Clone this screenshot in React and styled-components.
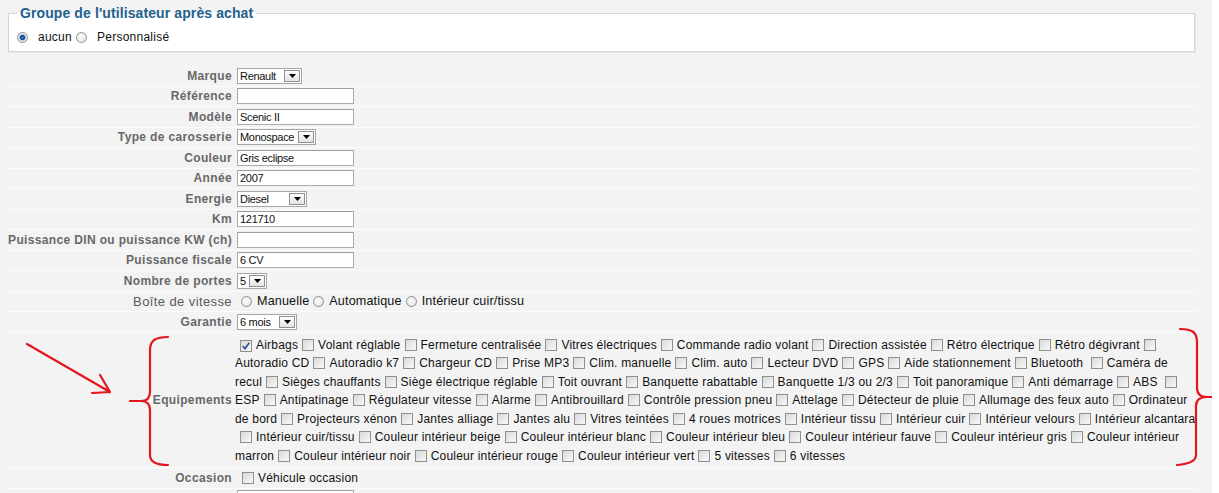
import React from 'react';
import styled, { createGlobalStyle } from 'styled-components';

//---------------------------------------------------------------------

const GlobalStyle = createGlobalStyle`
  html, body {
    margin: 0;
    padding: 0;
    background: #fff;
    overflow: hidden;
  }
  body {
    font-family: "Liberation Sans", Arial, sans-serif;
    font-size: 12px;
    color: #111;
  }
`;

const fields = [
  { label: 'Marque', kind: 'select', value: 'Renault', width: 65 },
  { label: 'Référence', kind: 'text', value: '' },
  { label: 'Modèle', kind: 'text', value: 'Scenic II' },
  { label: 'Type de carosserie', kind: 'select', value: 'Monospace', width: 79 },
  { label: 'Couleur', kind: 'text', value: 'Gris eclipse' },
  { label: 'Année', kind: 'text', value: '2007' },
  { label: 'Energie', kind: 'select', value: 'Diesel', width: 70 },
  { label: 'Km', kind: 'text', value: '121710' },
  { label: 'Puissance DIN ou puissance KW (ch)', kind: 'text', value: '' },
  { label: 'Puissance fiscale', kind: 'text', value: '6 CV' },
  { label: 'Nombre de portes', kind: 'select', value: '5', width: 30 },
  { label: 'Boîte de vitesse', kind: 'radios', light: true, options: ['Manuelle', 'Automatique', 'Intérieur cuir/tissu'] },
  { label: 'Garantie', kind: 'select', value: '6 mois', width: 60 },
];

// each line of the equipment list, as it wraps on screen
// a string is plain text, an object is a checkbox with its label
const equipLines = [
  [{ t: 'Airbags', on: true }, { t: 'Volant réglable' }, { t: 'Fermeture centralisée' }, { t: 'Vitres électriques' }, { t: 'Commande radio volant' }, { t: 'Direction assistée' }, { t: 'Rétro électrique' }, { t: 'Rétro dégivrant' }, { t: '' }],
  ['Autoradio CD', { t: 'Autoradio k7' }, { t: 'Chargeur CD' }, { t: 'Prise MP3' }, { t: 'Clim. manuelle' }, { t: 'Clim. auto' }, { t: 'Lecteur DVD' }, { t: 'GPS' }, { t: 'Aide stationnement' }, { t: 'Bluetooth\u00a0' }, { t: 'Caméra de' }],
  ['recul', { t: 'Sièges chauffants' }, { t: 'Siège électrique réglable' }, { t: 'Toit ouvrant' }, { t: 'Banquette rabattable' }, { t: 'Banquette 1/3 ou 2/3' }, { t: 'Toit panoramique' }, { t: 'Anti démarrage' }, { t: 'ABS\u00a0' }, { t: '' }],
  ['ESP', { t: 'Antipatinage' }, { t: 'Régulateur vitesse' }, { t: 'Alarme' }, { t: 'Antibrouillard' }, { t: 'Contrôle pression pneu' }, { t: 'Attelage' }, { t: 'Détecteur de pluie' }, { t: 'Allumage des feux auto' }, { t: 'Ordinateur' }],
  ['de bord', { t: 'Projecteurs xénon' }, { t: 'Jantes alliage' }, { t: 'Jantes alu' }, { t: 'Vitres teintées' }, { t: '4 roues motrices' }, { t: 'Intérieur tissu' }, { t: 'Intérieur cuir' }, { t: 'Intérieur velours' }, { t: 'Intérieur alcantara' }],
  [{ t: 'Intérieur cuir/tissu' }, { t: 'Couleur intérieur beige' }, { t: 'Couleur intérieur blanc' }, { t: 'Couleur intérieur bleu' }, { t: 'Couleur intérieur fauve' }, { t: 'Couleur intérieur gris' }, { t: 'Couleur intérieur' }],
  ['marron', { t: 'Couleur intérieur noir' }, { t: 'Couleur intérieur rouge' }, { t: 'Couleur intérieur vert' }, { t: '5 vitesses' }, { t: '6 vitesses' }],
];

//---------------------------------------------------------------------

const CheckBox = ({ on, first }) => (
  <Box first={first ? 1 : 0}>
    {on && (
      <svg width="10" height="10" viewBox="0 0 10 10">
        <path d="M1.8 5 L4 7.6 L8.3 1.8" fill="none" stroke="#2c4f9e" strokeWidth="1.7" />
      </svg>
    )}
  </Box>
);

const Radio = ({ on, small }) => <Circle on={on ? 1 : 0} small={small ? 1 : 0} />;

const Select = ({ value, width }) => (
  <SelectBox style={{ width }}>
    <span>{value}</span>
    <DropButton>
      <svg width="7" height="4" viewBox="0 0 7 4">
        <path d="M0 0 H7 L3.5 4 Z" fill="#000" />
      </svg>
    </DropButton>
  </SelectBox>
);

const Annotations = () => (
  <Overlay width="1219" height="493" viewBox="0 0 1219 493">
    <g fill="none" stroke="#e3161d" strokeWidth="2.2" strokeLinecap="round" strokeLinejoin="round">
      <path d="M27 344 L110 392 M100 375 L110 392 L92 393" />
      <path d="M168 337 C156 337 150 340 150 350 L150 392 C150 398 147 401 141 401 L130 401 M141 401 C147 401 150 404 150 410 L150 455 C150 462 156 465 168 465" />
      <path d="M1180 329 C1192 329 1197 332 1197 342 L1197 388 C1197 394 1200 397 1207 397 L1219 397 M1207 397 C1200 397 1196 400 1196 406 L1196 455 C1196 461 1190 464 1177 465" />
    </g>
  </Overlay>
);

const renderValue = f => {
  if (f.kind === 'select') return <Select value={f.value} width={f.width} />;
  if (f.kind === 'radios') {
    return (
      <RadioGroup>
        {f.options.map(o => (
          <RadioLabel key={o} wide={1}>
            <Radio small />
            {o}
          </RadioLabel>
        ))}
      </RadioGroup>
    );
  }
  return <TextInput readOnly value={f.value} />;
};

//---------------------------------------------------------------------

const App = () => {
  return (
    <Page>
      <GlobalStyle />
      <Group>
        <Legend>Groupe de l'utilisateur après achat</Legend>
        <RadioGroup>
          <RadioLabel>
            <Radio on />
            aucun
          </RadioLabel>
          <RadioLabel>
            <Radio />
            Personnalisé
          </RadioLabel>
        </RadioGroup>
      </Group>

      <Form>
        {fields.map(f => (
          <Row key={f.label}>
            <Label light={f.light ? 1 : 0}>{f.label}</Label>
            <Value>{renderValue(f)}</Value>
          </Row>
        ))}

        <Row>
          <Label>Equipements</Label>
          <EquipList>
            {equipLines.map((line, i) => (
              <EquipLine key={i}>
                {line.map((item, j) =>
                  typeof item === 'string' ? (
                    <span key={j}>{item}</span>
                  ) : (
                    <span key={j}>
                      <CheckBox on={item.on} first={j === 0} />
                      {item.t}
                    </span>
                  )
                )}
              </EquipLine>
            ))}
          </EquipList>
        </Row>

        <Row>
          <Label>Occasion</Label>
          <Value>
            <CheckBox first />
            Véhicule occasion
          </Value>
        </Row>

        <Row>
          <Label>Cylindrée (en cm3)</Label>
          <Value>
            <TextInput readOnly value="" />
          </Value>
        </Row>
      </Form>

      <Annotations />
    </Page>
  );
};

export default App;

//---------------------------------------------------------------------

const Page = styled.div`
  position: relative;
  width: 1212px;
  height: 493px;
  overflow: hidden;
  background: #f3f3f3;
  padding: 0 8px;
  box-sizing: border-box;
`;

const Group = styled.fieldset`
  margin: 5px 9px 0 0;
  padding: 8px 4px 6px 4px;
  border: 1px solid #d6d6d6;
  box-shadow: 1px 1px 0 #e6e6e6;
  background: #fff;
`;

const Legend = styled.legend`
  margin-left: 4px;
  padding: 0 3px;
  font-weight: bold;
  font-size: 14px;
  letter-spacing: 0.1px;
  line-height: 16px;
  color: #22618d;
`;

const RadioGroup = styled.div`
  display: flex;
  align-items: center;
  line-height: 16px;
  white-space: nowrap;
`;

const RadioLabel = styled.label`
  display: inline-flex;
  align-items: center;
  font-size: ${p => (p.wide ? '12.6px' : '12px')};
  letter-spacing: ${p => (p.wide ? '0.15px' : '0.25px')};
`;

const Circle = styled.span`
  display: inline-block;
  box-sizing: border-box;
  width: 11px;
  height: 11px;
  margin: ${p => (p.small ? '0 5px 0 4px' : '0 10px 0 4px')};
  border-radius: 50%;
  border: 1px solid #8c8f91;
  background: ${p =>
    p.on
      ? 'radial-gradient(circle, #3e74c8 0, #1c4e9a 2.3px, #dce4ee 3.3px, #f6f8fa 100%)'
      : 'radial-gradient(circle at 40% 40%, #fafafa 0, #e1e1e1 100%)'};
`;

const Form = styled.div`
  margin-top: 14px;
  width: 1189px;
`;

const Row = styled.div`
  display: grid;
  grid-template-columns: 227px 1fr;
  min-height: 20.5px;
  box-sizing: border-box;
  border-bottom: 1px solid #fcfcfc;
`;

const Label = styled.div`
  display: flex;
  align-items: center;
  justify-content: flex-end;
  padding-right: 3px;
  font-weight: ${p => (p.light ? 'normal' : 'bold')};
  font-size: ${p => (p.light ? '13px' : '12px')};
  letter-spacing: ${p => (p.light ? '0.4px' : '0.35px')};
  color: ${p => (p.light ? '#5a5a5a' : '#686868')};
  white-space: nowrap;
`;

const Value = styled.div`
  display: flex;
  align-items: center;
  padding-left: 2px;
  font-size: 12px;
  letter-spacing: 0.2px;
  white-space: nowrap;
`;

const TextInput = styled.input`
  box-sizing: border-box;
  width: 117px;
  height: 16px;
  margin: 0;
  padding: 0 2px;
  border: 1px solid #a9adb3;
  border-top-color: #9a9da2;
  background: #fff;
  font-family: "Liberation Sans", Arial, sans-serif;
  font-size: 11px;
  letter-spacing: -0.3px;
  color: #111;
  outline: none;
`;

const SelectBox = styled.span`
  display: inline-flex;
  align-items: center;
  justify-content: space-between;
  box-sizing: border-box;
  height: 16px;
  padding: 0 1px 0 2px;
  border: 1px solid #a3a6aa;
  background: #fff;
  font-size: 11px;
  letter-spacing: -0.3px;
  color: #111;
`;

const DropButton = styled.span`
  display: inline-flex;
  align-items: center;
  justify-content: center;
  box-sizing: border-box;
  width: 16px;
  height: 12px;
  border: 1px solid #8d9094;
  background: linear-gradient(#fdfdfd, #e3e3e3);
`;

const EquipList = styled.div`
  padding: 3px 0 2px 0;
  font-size: 12px;
  letter-spacing: 0.2px;
  line-height: 18.5px;
  color: #111;
`;

const EquipLine = styled.div`
  white-space: nowrap;
`;

const Box = styled.span`
  display: inline-flex;
  align-items: center;
  justify-content: center;
  box-sizing: border-box;
  width: 12px;
  height: 12px;
  margin: 0 4px 0 ${p => (p.first ? '5px' : '4px')};
  vertical-align: -2px;
  border: 1px solid #8f8f8f;
  background: linear-gradient(135deg, #d9d9d9, #f8f8f8);
`;

const Overlay = styled.svg`
  position: absolute;
  left: 0;
  top: 0;
  pointer-events: none;
  overflow: visible;
`;
